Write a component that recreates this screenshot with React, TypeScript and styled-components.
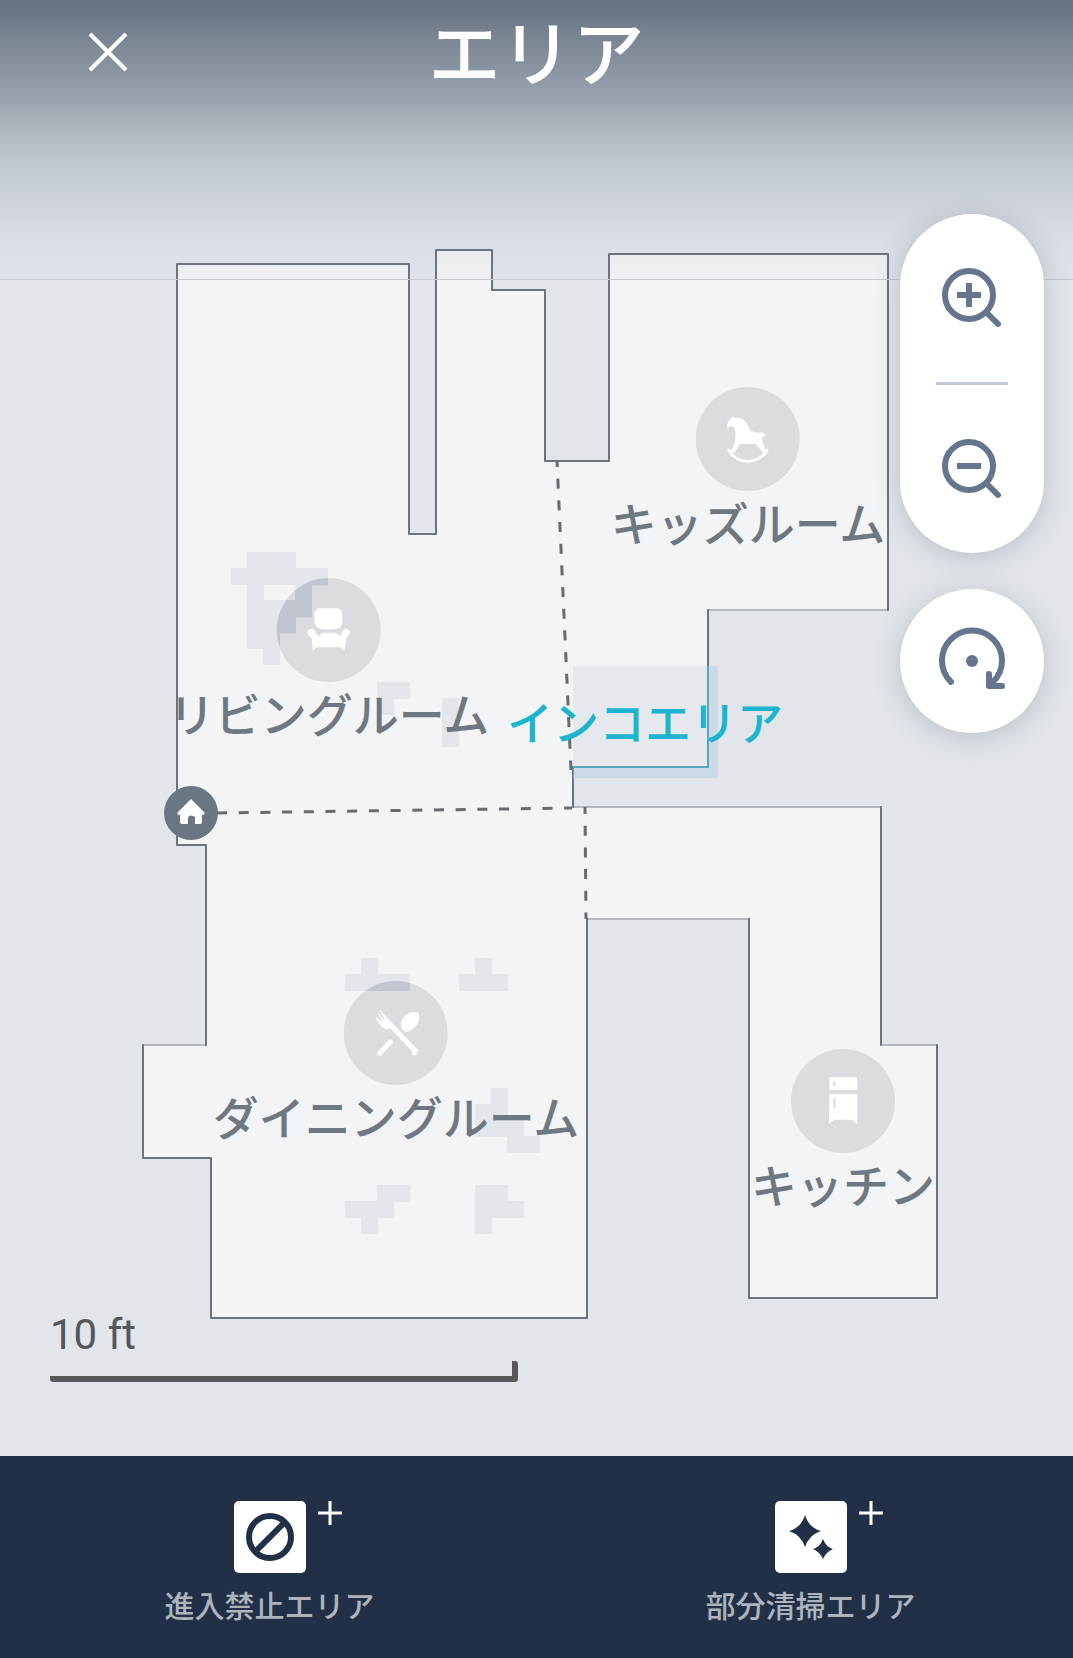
import React from "react";
import styled, { createGlobalStyle } from "styled-components";

const MAP_WIDTH = 1073;
const MAP_HEIGHT = 1456;

const GlobalStyle = createGlobalStyle`
  *, *::before, *::after { box-sizing: border-box; }
  body {
    margin: 0;
    background: #e2e6eb;
    font-family: Roboto, "Noto Sans CJK JP", sans-serif;
  }
  button {
    margin: 0;
    padding: 0;
    border: 0;
    background: none;
    color: inherit;
    font: inherit;
    cursor: pointer;
  }
`;

const Page = styled.div`
  display: flex;
  flex-direction: column;
  min-height: 100vh;
`;

/* Map, header, controls and scale share one grid cell and stack over each other. */
const Stage = styled.main`
  display: grid;
  flex: 1;
  grid-template: minmax(0, 1fr) / minmax(0, 1fr);
  > * { grid-area: 1 / 1; }
`;

const MapCanvas = styled.div`
  position: relative;
  align-self: start;
  width: 100%;
  aspect-ratio: ${MAP_WIDTH} / ${MAP_HEIGHT};
  overflow: hidden;
`;

const Plan = styled.svg`
  display: block;
  width: 100%;
  height: 100%;
`;

const Pin = styled.div`
  position: absolute;
  display: flex;
  flex-direction: column;
  align-items: center;
  gap: 10px;
  transform: translate(-50%, -52px);
`;

const Badge = styled.svg`
  width: 104px;
  height: 104px;
  border-radius: 50%;
  background: rgba(104, 100, 112, 0.17);
  fill: #fff;
`;

const MapLabel = styled.span`
  color: #6f7781;
  font-size: 46px;
  font-weight: 500;
  line-height: 48px;
  white-space: nowrap;
`;

const ZoneLabel = styled(MapLabel)`
  position: absolute;
  color: #1cb5cf;
  transform: translate(-50%, -50%);
`;

const HomeMarker = styled.svg`
  position: absolute;
  width: 54px;
  height: 54px;
  border-radius: 50%;
  background: #6b7683;
  fill: #fff;
  transform: translate(-50%, -50%);
`;

const Header = styled.header`
  z-index: 1;
  align-self: start;
  display: grid;
  grid-template-columns: 1fr auto 1fr;
  align-items: start;
  height: 280px;
  padding: 0 80px;
  border-bottom: 1px solid #c6cad0;
  color: #fff;
  background: linear-gradient(
    rgba(95, 107, 123, 0.95) 0,
    rgba(95, 107, 123, 0.74) 50px,
    rgba(95, 107, 123, 0.54) 100px,
    rgba(95, 107, 123, 0.41) 125px,
    rgba(95, 107, 123, 0.29) 150px,
    rgba(95, 107, 125, 0.2) 180px,
    rgba(95, 107, 130, 0.13) 210px,
    rgba(95, 107, 140, 0.07) 240px,
    rgba(95, 107, 150, 0.02) 280px
  );
`;

const CloseButton = styled.button`
  justify-self: start;
  width: 56px;
  height: 104px;
`;

const Title = styled.h1`
  margin: 0;
  font-size: 72px;
  font-weight: 500;
  line-height: 112px;
`;

const Glyph = styled.svg`
  display: block;
  margin: auto;
  fill: none;
  stroke: currentColor;
`;

const Controls = styled.div`
  z-index: 2;
  justify-self: end;
  align-self: start;
  display: flex;
  flex-direction: column;
  gap: 36px;
  width: 144px;
  margin: 214px 29px 0 0;
  color: #64758d;
`;

const ControlGroup = styled.div`
  display: flex;
  flex-direction: column;
  align-items: center;
  border-radius: 72px;
  background: #fff;
  box-shadow: 0 4px 28px rgba(60, 65, 80, 0.24);
`;

const ControlButton = styled.button<{ $height: number }>`
  width: 144px;
  height: ${({ $height }) => $height}px;
`;

const Divider = styled.hr`
  width: 72px;
  height: 3px;
  margin: 0;
  border: 0;
  background: #c3cbda;
`;

const Scale = styled.div`
  z-index: 1;
  align-self: end;
  justify-self: start;
  display: flex;
  flex-direction: column;
  gap: 2px;
  width: 468px;
  margin: 0 0 74px 50px;
  color: #54575b;
  font-size: 42px;
  line-height: 48px;
`;

const ScaleBar = styled.div`
  height: 21px;
  border: solid #595959;
  border-width: 0 6px 6px 0;
  border-radius: 3px;
`;

const Toolbar = styled.nav`
  display: grid;
  grid-template-columns: 1fr 1fr;
  column-gap: 16px;
  min-height: 202px;
  padding: 45px 0 29px 7px;
  background: #213046;
`;

const ToolButton = styled.button`
  display: flex;
  flex-direction: column;
  align-items: center;
  gap: 12px;
  color: #adb4be;
  font-size: 30px;
  font-weight: 500;
  line-height: 44px;
`;

const ToolIcon = styled.span`
  position: relative;
  display: block;
  width: 72px;
  height: 72px;
  border-radius: 5px;
  background: #fff;
  color: #213046;
`;

const AddMark = styled.svg`
  position: absolute;
  top: 0;
  left: 84px;
  stroke: #fff;
  stroke-width: 3;
`;

const WALLS =
  "M177 264H409V534H436V250H492V290H545V461H609V254H888V610H708V767H573V807H881V1045H937V1298H749V919H587V1318H211V1158H143V1045H206V845H177Z";

const SOFT_WALLS = "M709 610H887M574 807H880M588 919H748M144 1045H205M882 1045H936";

/* Obstacles as [x, y, columns, rows] on a 16px grid. */
const OBSTACLES = [
  [247, 552, 3, 1], [231, 568, 6, 1], [247, 584, 1, 1], [295, 584, 1, 1],
  [247, 600, 4, 1], [247, 616, 3, 1], [247, 632, 2, 1], [263, 648, 1, 1],
  [377, 682, 2, 1], [377, 698, 1, 1], [442, 698, 1, 3],
  [361, 958, 1, 1], [345, 974, 4, 1], [475, 958, 1, 1], [459, 974, 3, 1],
  [491, 1088, 1, 1], [475, 1104, 2, 1], [475, 1120, 3, 1], [507, 1136, 2, 1],
  [377, 1185, 2, 1], [345, 1201, 3, 1], [361, 1217, 1, 1],
  [475, 1185, 2, 1], [475, 1201, 3, 1], [475, 1217, 1, 1],
];

const horse = (
  <>
    <path d="M594 597V582Q600 565 612 560L616 564Q640 561 652 580L663 603L690 609Q704 604 712 620Q702 614 698 622Q697 634 709 661L701 668L679 642H632L615 669L605 663Q618 642 618 622Q621 598 609 588Q600 586 594 597Z" />
    <path d="M596 659Q619 694 655 694Q692 694 715 659" fill="none" stroke="#fff" strokeWidth="8" />
    <path d="M594 654L610 664L600 672ZM717 654L702 664L712 672Z" />
  </>
);

const armchair = (
  <>
    <path d="M508 236H560Q576 237 576 256V278Q575 289 566 296Q535 303 505 296Q492 287 492 273V255Q493 237 508 236Z" />
    <path d="M471 309Q473 298 483 298Q495 299 498 312L506 320Q512 309 523 309H552Q562 311 566 320L574 312Q576 298 588 298Q598 299 599 309Q594 319 588 324L582 364L569 353H500L487 364L485 328Q475 319 471 309Z" />
  </>
);

const cutlery = (
  <>
    <path d="M782 284L861 367" stroke="#fff" strokeWidth="15" />
    <path d="M750 370L782 336" stroke="#fff" strokeWidth="15" strokeLinecap="round" />
    <circle cx="855" cy="368" r="8" />
    <path d="M738 267L757 291Q764 300 777 297L789 284Q783 270 773 265L752 240L750 243L764 266L762 268L746 248L743 251L757 272L755 274L741 262Z" />
    <path d="M813 288Q812 266 832 252Q850 242 867 249Q872 268 861 285Q849 301 828 306Q815 302 813 288Z" />
  </>
);

const fridge = (
  <>
    <path fillRule="evenodd" d="M303 290H374Q381 290 381 297V329H297V297Q297 290 303 290ZM309 302V318H315V302Z" />
    <path fillRule="evenodd" d="M297 342H381V433L367 418H312L296 430ZM309 354V382H316V354Z" />
  </>
);

const ROOMS = [
  { name: "リビングルーム", x: 329, y: 630, viewBox: "379 145 312 312", icon: armchair },
  { name: "キッズルーム", x: 748, y: 439, viewBox: "499 471 312 312", icon: horse },
  { name: "ダイニングルーム", x: 396, y: 1033, viewBox: "642 153 312 312", icon: cutlery },
  { name: "キッチン", x: 843, y: 1101, viewBox: "182 206 312 312", icon: fridge },
];

const place = (x: number, y: number) => ({
  left: `${(x / MAP_WIDTH) * 100}%`,
  top: `${(y / MAP_HEIGHT) * 100}%`,
});

function Obstacles({ fill }: { fill: string }) {
  return (
    <g fill={fill} shapeRendering="crispEdges">
      {OBSTACLES.map(([x, y, cols, rows]) => (
        <rect key={`${x}-${y}`} x={x} y={y} width={cols * 16 + 1} height={rows * 16 + 1} />
      ))}
    </g>
  );
}

function FloorPlan() {
  return (
    <Plan viewBox={`0 0 ${MAP_WIDTH} ${MAP_HEIGHT}`} aria-hidden="true">
      <defs>
        <clipPath id="badges">
          {ROOMS.map((room) => (
            <circle key={room.name} cx={room.x} cy={room.y} r="52" />
          ))}
        </clipPath>
        <clipPath id="zone">
          <rect x="573" y="666" width="145" height="112" />
        </clipPath>
      </defs>
      <path d={WALLS} fill="#f2f4f6" />
      <Obstacles fill="#e3e7eb" />
      <g clipPath="url(#badges)">
        <Obstacles fill="#d2d9e2" />
      </g>
      <g clipPath="url(#zone)">
        <rect x="573" y="666" width="145" height="112" fill="#cbdae6" />
        <path d={WALLS} fill="#e5e9ed" />
      </g>
      <path d={WALLS} fill="none" stroke="#6c747e" strokeWidth="2" strokeLinejoin="round" />
      <path d={SOFT_WALLS} stroke="#b3b8c0" strokeWidth="2" />
      <path d={WALLS} fill="none" stroke="#5ba6ba" strokeWidth="2" clipPath="url(#zone)" />
      <g stroke="#666b71" strokeWidth="3" strokeDasharray="10 11.7">
        <path d="M557 461L571 770" strokeDashoffset="4" />
        <path d="M217 813L572 808" strokeDashoffset="0" />
        <path d="M585 807L586 919" strokeDashoffset="3" />
      </g>
    </Plan>
  );
}

function Magnifier({ plus }: { plus?: boolean }) {
  return (
    <Glyph width="64" height="64" viewBox="0 0 64 64" strokeWidth="6">
      <circle cx="29" cy="29" r="24" />
      <path d="M47 47L58 58" strokeLinecap="round" />
      <path d={plus ? "M17 29H41M29 17V41" : "M17 29H41"} />
    </Glyph>
  );
}

export default function App() {
  return (
    <Page>
      <GlobalStyle />
      <Stage>
        <MapCanvas>
          <FloorPlan />
          {ROOMS.map((room) => (
            <Pin key={room.name} style={place(room.x, room.y)}>
              <Badge viewBox={room.viewBox} aria-hidden="true">{room.icon}</Badge>
              <MapLabel>{room.name}</MapLabel>
            </Pin>
          ))}
          <HomeMarker style={place(191, 813)} viewBox="0 0 54 54" aria-hidden="true">
            <path d="M27 13L40 26Q42 29 38 29V36Q38 38 36 38H31V31Q27 28 24 31V38H18Q16 38 16 36V29Q12 29 14 26Z" />
          </HomeMarker>
          <ZoneLabel style={place(645, 724)}>インコエリア</ZoneLabel>
        </MapCanvas>

        <Header>
          <CloseButton type="button" aria-label="閉じる">
            <Glyph width="40" height="40" viewBox="0 0 40 40" strokeWidth="4">
              <path d="M2 2L38 38M38 2L2 38" />
            </Glyph>
          </CloseButton>
          <Title>エリア</Title>
        </Header>

        <Controls>
          <ControlGroup>
            <ControlButton type="button" $height={168} aria-label="拡大">
              <Magnifier plus />
            </ControlButton>
            <Divider />
            <ControlButton type="button" $height={168} aria-label="縮小">
              <Magnifier />
            </ControlButton>
          </ControlGroup>
          <ControlGroup>
            <ControlButton type="button" $height={144} aria-label="回転">
              <Glyph width="72" height="72" viewBox="0 0 72 72" strokeWidth="6" strokeLinecap="round" strokeLinejoin="round">
                <path d="M15 57A30 30 0 1 1 57 57" />
                <path d="M53 49V61H66" />
                <circle cx="36" cy="36" r="6" fill="currentColor" stroke="none" />
              </Glyph>
            </ControlButton>
          </ControlGroup>
        </Controls>

        <Scale>
          <span>10 ft</span>
          <ScaleBar />
        </Scale>
      </Stage>

      <Toolbar>
        <ToolButton type="button">
          <ToolIcon>
            <Glyph width="72" height="72" viewBox="0 0 72 72" strokeWidth="6" aria-hidden="true">
              <circle cx="36" cy="36" r="21" />
              <path d="M21 51L51 21" />
            </Glyph>
            <AddMark width="24" height="24" viewBox="0 0 24 24" aria-hidden="true">
              <path d="M0 12H24M12 0V24" />
            </AddMark>
          </ToolIcon>
          <span>進入禁止エリア</span>
        </ToolButton>
        <ToolButton type="button">
          <ToolIcon>
            <Glyph width="72" height="72" viewBox="0 0 72 72" aria-hidden="true">
              <g fill="currentColor" stroke="none">
                <path d="M30 14Q34 27 46 30Q34 34 30 46Q26 34 14 30Q26 27 30 14Z" />
                <path d="M48 38Q51 46 58 48Q51 51 48 58Q45 51 38 48Q45 46 48 38Z" />
              </g>
            </Glyph>
            <AddMark width="24" height="24" viewBox="0 0 24 24" aria-hidden="true">
              <path d="M0 12H24M12 0V24" />
            </AddMark>
          </ToolIcon>
          <span>部分清掃エリア</span>
        </ToolButton>
      </Toolbar>
    </Page>
  );
}
